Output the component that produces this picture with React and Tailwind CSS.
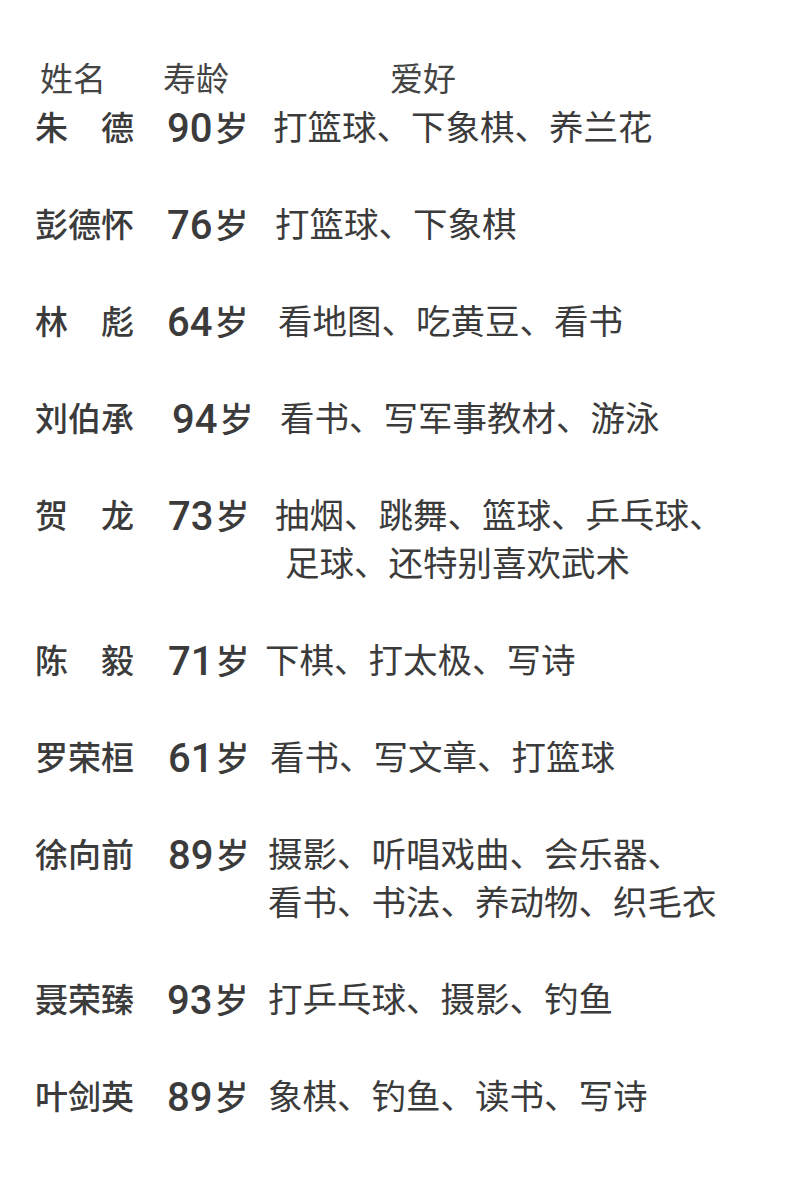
const rows = [
  { name: ['朱', '德'], age: '90', agePad: 'pl-0', lines: [['打篮球、下象棋、养兰花', 'pl-[8px]']] },
  { name: ['彭德怀'], age: '76', agePad: 'pl-0', lines: [['打篮球、下象棋', 'pl-[10px]']] },
  { name: ['林', '彪'], age: '64', agePad: 'pl-0', lines: [['看地图、吃黄豆、看书', 'pl-[13px]']] },
  { name: ['刘伯承'], age: '94', agePad: 'pl-[5px]', lines: [['看书、写军事教材、游泳', 'pl-[15px]']] },
  { name: ['贺', '龙'], age: '73', agePad: 'pl-[1px]', lines: [['抽烟、跳舞、篮球、乒乓球、', 'pl-[10px]'], ['足球、还特别喜欢武术', 'pl-[20px]']] },
  { name: ['陈', '毅'], age: '71', agePad: 'pl-[1px]', lines: [['下棋、打太极、写诗', 'pl-0']] },
  { name: ['罗荣桓'], age: '61', agePad: 'pl-[1px]', lines: [['看书、写文章、打篮球', 'pl-[5px]']] },
  { name: ['徐向前'], age: '89', agePad: 'pl-[1px]', lines: [['摄影、听唱戏曲、会乐器、', 'pl-[3px]'], ['看书、书法、养动物、织毛衣', 'pl-[3px]']] },
  { name: ['聂荣臻'], age: '93', agePad: 'pl-0', lines: [['打乒乓球、摄影、钓鱼', 'pl-[3px]']] },
  { name: ['叶剑英'], age: '89', agePad: 'pl-0', lines: [['象棋、钓鱼、读书、写诗', 'pl-[3px]']] },
]

const font = { fontFamily: '"Liberation Sans", "Noto Sans CJK SC", sans-serif' }
const digitFont = { fontFamily: 'Roboto, "Liberation Sans", sans-serif' }

export default function App() {
  return (
    <div className="w-[806px] h-[1180px] bg-white text-[#3b3b3b] overflow-hidden" style={font}>
      <div className="pt-[56px]">
        {/* header */}
        <div className="flex items-center h-[48px] text-[33px] text-[#444]">
          <div className="pl-[40px] w-[163px]">姓名</div>
          <div className="w-[227px]">寿龄</div>
          <div>爱好</div>
        </div>

        <div className="flex flex-col gap-[49px] mt-[1px]">
          {rows.map((r, i) => (
            <div key={i} className="flex items-start">
              <div className="pl-[35px] w-[167px] flex">
                <div className={`w-[99px] h-[48px] flex items-center whitespace-nowrap text-[33px] font-medium ${r.name.length > 1 ? 'justify-between' : ''}`}>
                  {r.name.map((c, j) => <span key={j}>{c}</span>)}
                </div>
              </div>
              <div className={`w-[98px] h-[48px] flex items-center whitespace-nowrap ${r.agePad}`}>
                <span className="text-[40px] font-medium leading-none" style={digitFont}>{r.age}</span>
                <span className="text-[34px] font-medium ml-[2px]">岁</span>
              </div>
              <div className="flex flex-col">
                {r.lines.map(([t, pad], k) => (
                  <div key={k} className={`h-[48px] flex items-center text-[34.5px] whitespace-nowrap ${pad}`}>{t}</div>
                ))}
              </div>
            </div>
          ))}
        </div>
      </div>
    </div>
  )
}
